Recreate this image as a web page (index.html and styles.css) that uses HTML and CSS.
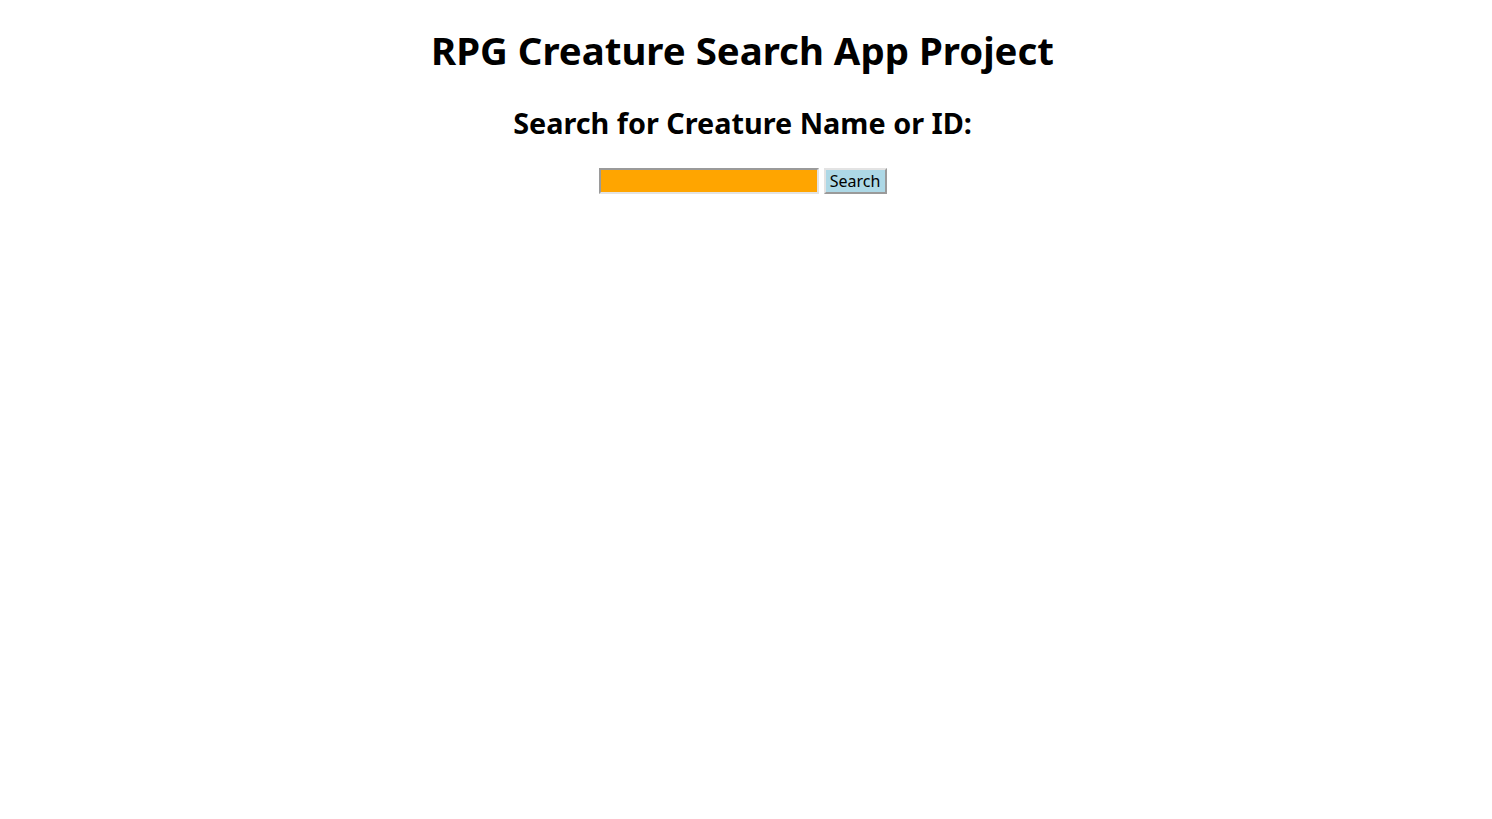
FILE: index.html
```html
<!DOCTYPE html>
<html>
<head>
<meta charset="utf-8">
<link rel="stylesheet" href="styles.css">
</head>
<body>
<h1 class="title">RPG Creature Search App Project</h1>
<h2 class="subtitle">Search for Creature Name or ID:</h2>
<div class="search-row">
  <input class="search-input" type="text" id="search-input">
  <button class="search-button" id="search-button">Search</button>
</div>
</body>
</html>
```
FILE: styles.css
```css
body {
  margin: 8px 15px 8px 8px;
  font-family: "Noto Sans", sans-serif;
  text-align: center;
  background: #fff;
}
.title {
  font-size: 38.4px;
  margin: 16px 0 0;
  line-height: normal;
}
.subtitle {
  font-size: 28.8px;
  margin: 27px 0 0;
  line-height: normal;
}
.search-row {
  display: flex;
  justify-content: center;
  gap: 5px;
  margin-top: 26px;
}
.search-input {
  width: 220px;
  height: 26px;
  box-sizing: border-box;
  background: orange;
  border: 2px solid;
  border-color: #9a9a9a #e3e3e3 #e3e3e3 #9a9a9a;
  padding: 0;
}
.search-button {
  height: 26px;
  width: 63px;
  box-sizing: border-box;
  background: lightblue;
  border: 2px solid;
  border-color: #e3e3e3 #9a9a9a #9a9a9a #e3e3e3;
  font-family: "Noto Sans", sans-serif;
  font-size: 16px;
  color: #000;
  padding: 0;
}
```
